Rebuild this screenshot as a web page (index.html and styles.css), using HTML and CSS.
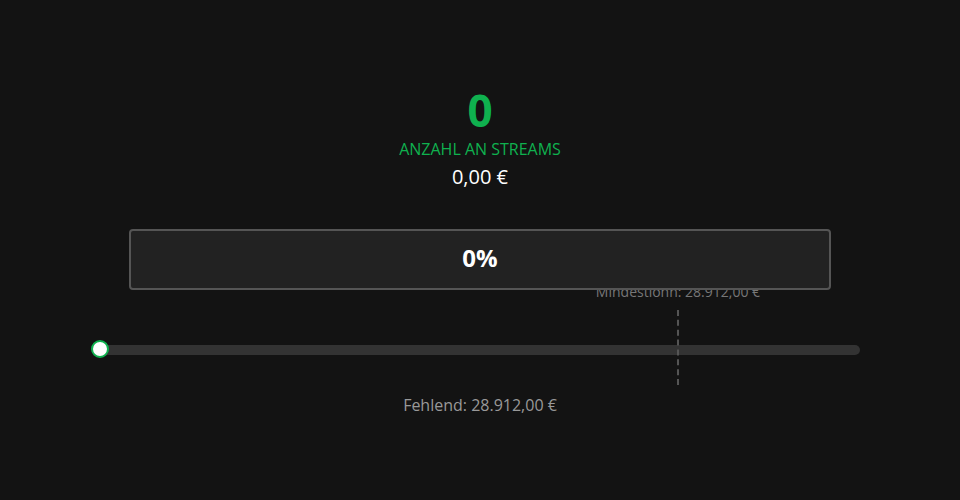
FILE: index.html
```html
<!DOCTYPE html>
<html lang="de">
<head>
<meta charset="utf-8">
<title>Streams</title>
<link rel="stylesheet" href="styles.css">
</head>
<body>
<main class="page">
  <section class="stats">
    <div class="stats-count">0</div>
    <div class="stats-label">ANZAHL AN STREAMS</div>
    <div class="stats-amount">0,00 €</div>
  </section>
  <div class="progress-box">0%</div>
  <div class="slider">
    <div class="slider-track"></div>
    <div class="slider-thumb"></div>
    <div class="marker" style="left: 76.05%;">
      <span class="marker-label">Mindestlohn: 28.912,00 €</span>
      <span class="marker-line"></span>
    </div>
  </div>
  <div class="missing">Fehlend: 28.912,00 €</div>
</main>
</body>
</html>
```
FILE: styles.css
```css
html, body {
  margin: 0;
  padding: 0;
  background: #131313;
  height: 100%;
}
body {
  font-family: "Open Sans", "Noto Sans", sans-serif;
  color: #fff;
}
.page {
  display: flex;
  flex-direction: column;
  align-items: center;
  padding-top: 85px;
}
.stats {
  display: flex;
  flex-direction: column;
  align-items: center;
}
.stats-count {
  font-size: 44px;
  font-weight: 700;
  line-height: 50px;
  color: #0fb14f;
}
.stats-label {
  margin-top: 4px;
  font-size: 16px;
  line-height: 20px;
  color: #0fb14f;
}
.stats-amount {
  margin-top: 6px;
  font-size: 20px;
  line-height: 24px;
  color: #fff;
}
.progress-box {
  position: relative;
  z-index: 2;
  box-sizing: border-box;
  margin-top: 40px;
  width: 702px;
  height: 61px;
  padding-bottom: 4px;
  background: #222;
  border: 2px solid #555;
  border-radius: 4px;
  display: flex;
  align-items: center;
  justify-content: center;
  font-size: 24px;
  font-weight: 700;
  color: #fff;
}
.slider {
  position: relative;
  width: 760px;
  height: 100px;
}
.slider-track {
  position: absolute;
  left: 0;
  right: 0;
  top: 55px;
  height: 10px;
  border-radius: 5px;
  background: #333;
}
.slider-thumb {
  position: absolute;
  left: -9px;
  top: 50px;
  width: 14px;
  height: 14px;
  border-radius: 50%;
  background: #fff;
  border: 2px solid #0fb14f;
  z-index: 1;
}
.marker {
  position: absolute;
  top: 0;
  bottom: 0;
  width: 0;
}
.marker-label {
  position: absolute;
  top: -7px;
  left: 0;
  transform: translateX(-50%);
  white-space: nowrap;
  font-size: 14px;
  line-height: 18px;
  color: #777;
}
.marker-line {
  position: absolute;
  top: 20px;
  left: -1px;
  height: 75px;
  border-left: 2px dashed #555;
}
.missing {
  margin-top: 5px;
  font-size: 16px;
  line-height: 20px;
  color: #999;
}
```
